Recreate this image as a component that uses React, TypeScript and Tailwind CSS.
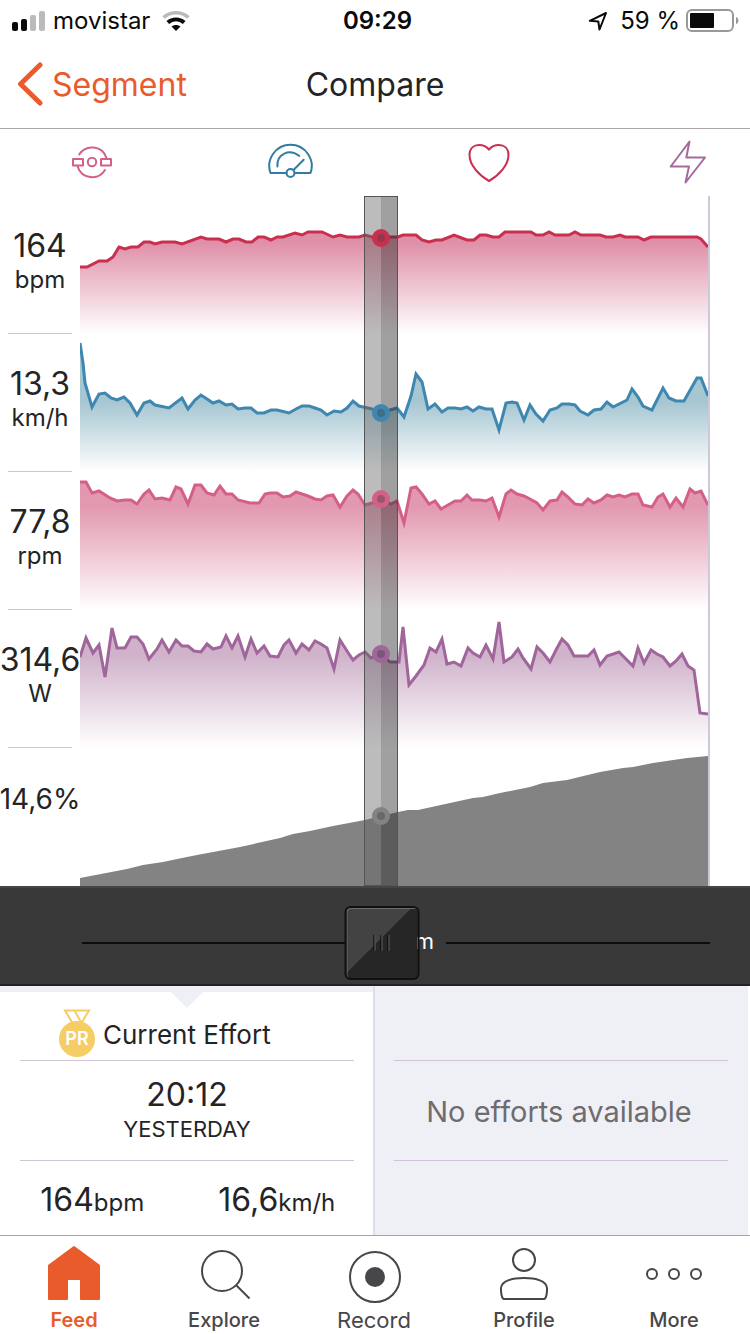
import { useState } from 'react';
import type { ReactNode } from 'react';

const PLOT_WIDTH = 628;
const ROW_HEIGHT = 138;

type Series = {
    id: string;
    value: string;
    unit?: string;
    stroke: string;
    fill: string;
    fillStart: number;
    points: string;
};

// points are x,y pairs inside a 628 x 138 row
const series: Series[] = [
    {
        id: 'heartrate',
        value: '164',
        unit: 'bpm',
        stroke: '#c9304f',
        fill: '#df8fa7',
        fillStart: 46,
        points:
            '0,71 7,71 19,65 27,65 33,61 39,51 45,53 51,51 58,51 64,46 70,46 75,48 82,46 95,46 102,48 121,41 127,43 139,43 146,46 153,43 159,43 166,46 172,46 178,41 184,41 191,44 197,41 203,41 215,37 222,39 228,36 242,36 253,41 260,39 267,41 279,41 285,39 292,41 301,42 310,41 318,41 323,39 336,39 342,44 349,46 356,44 362,44 374,39 387,44 394,44 400,39 406,39 413,41 419,41 425,36 451,36 456,39 463,39 469,36 475,39 489,39 495,36 501,39 520,39 526,41 533,41 540,39 545,41 558,41 564,44 571,41 617,41 621,43 628,51',
    },
    {
        id: 'speed',
        value: '13,3',
        unit: 'km/h',
        stroke: '#3e87b0',
        fill: '#a6c6d2',
        fillStart: 68,
        points:
            '0,9 3,29 5,49 12,73 19,60 25,59 31,64 37,66 44,63 50,69 57,81 64,69 70,67 75,71 89,74 102,64 108,75 115,66 121,61 127,65 133,69 139,67 146,71 152,70 158,75 165,74 171,74 177,79 184,79 191,76 197,76 209,79 216,75 222,72 229,72 235,74 241,76 247,81 254,77 261,78 267,74 273,67 279,72 292,75 301,79 310,76 317,74 324,83 331,62 336,40 342,48 348,75 355,70 362,78 368,74 375,74 381,75 387,73 393,77 399,73 406,75 412,75 419,96 426,69 432,68 437,69 444,86 450,71 456,80 463,87 470,76 477,74 482,70 489,70 495,71 500,77 508,81 514,76 521,75 527,68 533,73 547,66 552,55 558,63 563,72 572,76 583,54 589,64 596,67 604,67 617,44 621,44 628,62',
    },
    {
        id: 'cadence',
        value: '77,8',
        unit: 'rpm',
        stroke: '#d4608a',
        fill: '#e298af',
        fillStart: 34,
        points:
            '0,10 6,10 12,21 19,19 30,26 37,29 45,28 51,28 57,32 64,22 69,18 75,27 82,26 90,28 96,15 101,17 108,32 115,13 121,13 127,21 134,23 140,14 146,22 152,22 158,28 170,31 179,31 185,22 190,21 197,21 203,25 210,24 216,20 222,22 228,24 235,27 241,28 247,24 253,23 260,35 267,24 273,18 278,22 285,33 292,31 301,27 311,32 317,29 324,51 331,16 336,15 342,22 349,32 355,29 361,37 368,33 375,29 381,29 387,23 392,28 400,28 406,29 412,26 419,45 426,22 431,18 437,22 444,24 450,27 457,31 463,38 470,29 477,28 482,20 488,25 495,32 502,33 508,27 514,31 521,28 527,23 533,25 539,23 545,25 552,22 558,22 563,33 572,35 578,25 583,22 590,35 596,26 603,35 610,17 615,21 621,19 628,33',
    },
    {
        id: 'power',
        value: '314,6',
        unit: 'W',
        stroke: '#a0659a',
        fill: '#d0b3cb',
        fillStart: 46,
        points:
            '0,47 6,28 13,43 19,35 25,67 32,18 37,38 45,38 51,27 57,27 63,34 69,49 77,39 82,30 89,42 96,30 102,36 108,36 114,41 121,42 127,34 133,39 141,37 146,26 152,38 158,26 165,47 171,29 177,43 184,36 190,46 198,47 204,35 209,30 216,43 222,34 229,40 235,31 241,34 247,38 254,59 260,30 267,41 273,50 279,45 285,42 291,48 301,44 310,52 319,52 323,17 329,75 336,66 344,55 350,38 356,42 362,29 367,54 374,52 381,56 388,38 393,43 400,47 406,35 413,49 419,12 424,52 432,47 438,39 443,48 451,59 457,37 463,43 470,52 476,40 482,29 488,35 494,46 508,46 514,40 520,55 527,46 539,42 545,48 553,56 558,38 564,53 571,40 577,44 583,47 590,56 596,51 602,44 608,56 614,60 620,103 628,104',
    },
    {
        id: 'grade',
        value: '14,6%',
        stroke: '#838383',
        fill: '#838383',
        fillStart: ROW_HEIGHT,
        points:
            '0,130 47,121 63,117 83,114 102,110 117,107 160,99 200,90 213,86 230,83 253,78 285,72 301,68 318,64 328,62 338,62 393,50 403,49 420,45 450,39 463,35 487,32 520,24 543,20 553,19 573,15 607,10 628,8',
    },
];

const valueAt = (points: string, x: number) => {
    const pairs = points.split(' ').map((p) => p.split(',').map(Number));
    const next = pairs.findIndex(([px]) => px >= x);
    if (next <= 0) return pairs[0][1];
    const [x0, y0] = pairs[next - 1];
    const [x1, y1] = pairs[next];
    return y0 + ((y1 - y0) * (x - x0)) / (x1 - x0);
};

function StatusBar() {
    return (
        <div className="grid h-10 grid-cols-[1fr_auto_1fr] items-center pl-3 pr-[11px] pt-px text-2xl text-[#0a0a0a]">
            <div className="flex items-center gap-2">
                <svg width="33" height="20" viewBox="0 0 33 20">
                    <rect x="0" y="11" width="6" height="9" rx="2" fill="#0a0a0a" />
                    <rect x="9" y="8" width="6" height="12" rx="2" fill="#0a0a0a" />
                    <rect x="18" y="4" width="6" height="16" rx="2" fill="#bbb" />
                    <rect x="27" y="0" width="6" height="20" rx="2" fill="#bbb" />
                </svg>
                <span>movistar</span>
                <svg className="ml-1" width="28" height="20" viewBox="0 0 28 20" fill="none">
                    <path d="M1.5 6.5C8.5 .2 19.5 .2 26.5 6.5" stroke="#bbb" strokeWidth="3.6" />
                    <path d="M5.8 11.5C10.5 7.2 17.5 7.2 22.2 11.5" stroke="#0a0a0a" strokeWidth="3.8" />
                    <path d="M14 20L9.5 15.600C12 13.400 16 13.400 18.5 15.600Z" fill="#0a0a0a" />
                </svg>
            </div>
            <span className="pl-1 font-semibold">09:29</span>
            <div className="flex items-center justify-end">
                <svg width="20" height="20" viewBox="0 0 20 20" fill="none" stroke="#0a0a0a" strokeWidth="2" strokeLinejoin="round">
                    <path d="M1.800 9.800L18 2L11.500 18.500L10.300 10.500Z" />
                </svg>
                <span className="ml-3">59 %</span>
                <svg className="ml-1.5" width="53" height="24" viewBox="0 0 53 24">
                    <rect x="1" y="1" width="46" height="21" rx="5" fill="none" stroke="#999" strokeWidth="2" />
                    <rect x="4" y="4" width="24" height="15" rx="1" fill="#0a0a0a" />
                    <path d="M50 8C53.300 9 53.300 14 50 15Z" fill="#999" />
                </svg>
            </div>
        </div>
    );
}

function NavBar() {
    return (
        <header className="grid h-[89px] grid-cols-[1fr_auto_1fr] items-center border-b border-[#aca6ac] px-4 pt-0.5">
            <a href="#segment" className="flex items-center gap-2 text-[32px] text-[#ea5b2c]">
                <svg className="mb-0.5" width="28" height="44" viewBox="0 0 28 44" fill="none" stroke="currentColor" strokeWidth="5" strokeLinecap="round" strokeLinejoin="round">
                    <path d="M24 3L4.5 22L24 41" />
                </svg>
                Segment
            </a>
            <h1 className="text-[32px] text-[#242426]">Compare</h1>
        </header>
    );
}

function MetricButton({ label, color, children }: { label: string; color: string; children: ReactNode }) {
    return (
        <button type="button" aria-label={label} className={color}>
            <svg width="48" height="48" viewBox="0 0 48 48" fill="none" stroke="currentColor" strokeWidth="2" strokeLinecap="round" strokeLinejoin="round">
                {children}
            </svg>
        </button>
    );
}

function MetricToggles() {
    return (
        <div className="flex h-[67px] items-center justify-between pb-0.5 pl-[68px] pr-[39px]">
            <MetricButton label="Cadence" color="text-[#d4608a]">
                <path d="M11.2 16.5A15.2 15.2 0 0 1 38.5 20" />
                <path d="M9.6 28.5A15.2 15.2 0 0 0 37 32" />
                <circle cx="24" cy="24" r="4.2" />
                <rect x="5" y="21" width="10" height="6.5" />
                <rect x="33" y="21" width="10" height="6.5" />
            </MetricButton>
            <MetricButton label="Speed" color="text-[#327ca4]">
                <path d="M20.5 35H4.5A21.2 21.2 0 1 1 44.5 35H28.5" />
                <path d="M11.4 28.5C10.5 15.5 23.5 10.5 33.3 18" />
                <path d="M27.5 32L37.7 21.7" />
                <circle cx="24.5" cy="35" r="4" />
            </MetricButton>
            <MetricButton label="Heart rate" color="text-[#c9304f]">
                <path d="M24 43C14 37.5 4.5 27 4.5 17C4.5 10 9 7 14 7C18.5 7 22 9 24 11.7C26 9 29.5 7 34 7C39 7 43.5 10 43.5 17C43.5 27 34 37.5 24 43Z" />
            </MetricButton>
            <MetricButton label="Power" color="text-[#a56a9c]">
                <path d="M26.5 3.5L7.7 28.5H26L22.5 44.5L42 19.5H23.3Z" />
            </MetricButton>
        </div>
    );
}

function EffortChart({ position }: { position: number }) {
    const left = `${(position / PLOT_WIDTH) * 100}%`;
    return (
        <div className="flex pr-10">
            <div className="w-20 shrink-0 text-[#242426]">
                {series.map((s) => (
                    <div key={s.id} className="flex h-[138px] flex-col items-center pt-7">
                        <span className={s.unit ? 'text-[32px] leading-[44px]' : 'text-[28px] leading-[46px]'}>{s.value}</span>
                        {s.unit && <span className="text-2xl leading-6">{s.unit}</span>}
                        {s.unit && <hr className="mt-auto w-16 border-[#cec4d2]" />}
                    </div>
                ))}
            </div>
            <div className="relative flex-1 border-r-2 border-[#cdc8da]">
                {series.map((s) => (
                    <svg key={s.id} className="block h-[138px] w-full overflow-hidden" viewBox="0 0 628 138" preserveAspectRatio="none">
                        <defs>
                            <linearGradient id={`fade-${s.id}`} gradientUnits="userSpaceOnUse" x1="0" x2="0" y1={s.fillStart} y2={ROW_HEIGHT}>
                                <stop offset="0" stopColor={s.fill} />
                                <stop offset="1" stopColor={s.unit ? '#fff' : s.fill} />
                            </linearGradient>
                        </defs>
                        <polygon points={`0,138 ${s.points} 628,138`} fill={`url(#fade-${s.id})`} />
                        {s.unit && (
                            <polyline points={s.points} fill="none" stroke={s.stroke} strokeWidth="3" vectorEffect="non-scaling-stroke" />
                        )}
                    </svg>
                ))}
                {/* Scrub cursor */}
                <div className="absolute inset-y-0 flex w-[34px] -translate-x-1/2 border border-[#555]" style={{ left }}>
                    <div className="flex-1 bg-[#646464]/43" />
                    <div className="flex-1 bg-[#2c2c2c]/45" />
                </div>
                {series.map((s, i) => (
                    <div
                        key={s.id}
                        className="absolute flex size-[18px] -translate-x-1/2 -translate-y-1/2 items-center justify-center rounded-full"
                        style={{ left, top: i * ROW_HEIGHT + valueAt(s.points, position), backgroundColor: s.stroke }}
                    >
                        <div className="size-2 rounded-full bg-[#444]/40" />
                    </div>
                ))}
            </div>
        </div>
    );
}

function Scrubber({ position, onChange }: { position: number; onChange: (value: number) => void }) {
    return (
        <div className="h-[100px] border-b-2 border-t-2 border-b-[#222224] border-t-[#454545] bg-[#393939] pl-20 pr-10">
            <div className="relative flex h-full items-center pl-0.5 pt-[14px]">
                <div className="h-0.5 flex-1 bg-[#0c0c0c]" />
                <span className="w-[100px] pb-1 pr-3 text-right text-[22px] text-white">km</span>
                <div className="h-0.5 flex-1 bg-[#0c0c0c]" />
                <div
                    className="absolute top-[18px] flex h-[74px] w-[75px] -translate-x-1/2 items-center justify-center gap-[5px] rounded-md border-2 border-[#101010] bg-[linear-gradient(135deg,#434343_46%,#262626_46%)] shadow-[inset_1px_1px_0_#6a6a6a]"
                    style={{ left: `${(position / PLOT_WIDTH) * 100}%` }}
                >
                    <span className="h-4 w-0.5 border-r border-[#777] bg-black" />
                    <span className="h-4 w-0.5 border-r border-[#777] bg-black" />
                    <span className="h-4 w-0.5 border-r border-[#777] bg-black" />
                </div>
                <input
                    type="range"
                    aria-label="Position on segment"
                    min={0}
                    max={PLOT_WIDTH}
                    value={position}
                    onChange={(e) => onChange(Number(e.target.value))}
                    className="absolute inset-0 w-full cursor-pointer opacity-0"
                />
            </div>
        </div>
    );
}

function Efforts() {
    return (
        <div className="grid grid-cols-2 text-[#242426]">
            <section className="border-r-2 border-[#dcdfea]">
                <div className="h-1.5 bg-[#eff0f6]" />
                <div className="relative ml-5 mr-[19px] flex h-[69px] items-end gap-2 border-b border-[#d0c6d6] pb-[3px] pl-[39px]">
                    <svg className="absolute left-[151px] top-0" width="32" height="16" viewBox="0 0 32 16">
                        <path d="M0 0H32L16 16Z" fill="#eff0f6" />
                    </svg>
                    <svg width="36" height="48" viewBox="0 0 36 48">
                        <path d="M6 1.5H30L22.500 14H13.500Z" fill="#fff" stroke="#f6cc64" strokeWidth="2" />
                        <path d="M15.500 1.500L22.500 14" stroke="#f6cc64" strokeWidth="2" />
                        <circle cx="18" cy="30" r="18" fill="#f6cc64" />
                        <text x="18" y="36" textAnchor="middle" fontSize="18" fontWeight="600" fill="#fff">PR</text>
                    </svg>
                    <h2 className="pb-1.5 text-[26px] leading-8">Current Effort</h2>
                </div>
                <div className="ml-5 mr-[19px] flex h-[100px] flex-col items-center border-b border-[#d0c6d6] pt-[14px]">
                    <span className="text-[32px] leading-10">20:12</span>
                    <span className="text-[22px] leading-7">YESTERDAY</span>
                </div>
                <div className="grid h-[74px] grid-cols-2 items-center pr-1 pt-1 text-center">
                    <p className="text-[32px]">
                        164<span className="text-2xl">bpm</span>
                    </p>
                    <p className="text-[32px]">
                        16,6<span className="text-2xl">km/h</span>
                    </p>
                </div>
            </section>
            <section className="mr-0.5 bg-[#eff0f6] pl-[19px] pr-5">
                <div className="h-[75px] border-b border-[#d3c3d9]" />
                <p className="flex h-[100px] items-center justify-center border-b border-[#d3c3d9] pr-1 pt-0.5 text-[29px] text-[#6f6c70]">
                    No efforts available
                </p>
            </section>
        </div>
    );
}

function Tab({ label, className, children }: { label: string; className: string; children: ReactNode }) {
    return (
        <a href={`#${label.toLowerCase()}`} className={`flex flex-col items-center gap-0.5 leading-7 ${className}`}>
            <svg width="60" height="64" viewBox="0 0 60 64" fill="none" stroke="currentColor" strokeWidth="2">
                {children}
            </svg>
            <span className="pr-0.5">{label}</span>
        </a>
    );
}

function TabBar() {
    return (
        <nav className="grid grid-cols-5 border-t border-[#a5a3a8] pt-1">
            <Tab label="Feed" className="text-xl/7 font-semibold text-[#ea5b2c]">
                <path d="M29 7L54 25.5V59H36V39H22V59H4V25.5Z" fill="currentColor" strokeLinejoin="round" />
            </Tab>
            <Tab label="Explore" className="text-xl/7 font-medium text-[#47474a]">
                <circle cx="27" cy="31" r="20" />
                <path d="M41.5 45.5L54.5 58.5" />
            </Tab>
            <Tab label="Record" className="text-[22px]/7 text-[#47474a]">
                <circle cx="30" cy="37" r="25" />
                <circle cx="30" cy="37" r="10" fill="currentColor" stroke="none" />
            </Tab>
            <Tab label="Profile" className="text-xl/7 font-medium text-[#47474a]">
                <circle cx="29" cy="20" r="11" />
                <path d="M9 59C6.5 59 5.8 51.5 6 48C6.5 41 17 38 29 38C41 38 51.5 41 52 48C52.2 51.5 51.5 59 49 59Z" />
            </Tab>
            <Tab label="More" className="text-xl/7 font-medium text-[#47474a]">
                <circle cx="7" cy="34" r="5" />
                <circle cx="29" cy="34" r="5" />
                <circle cx="51" cy="34" r="5" />
            </Tab>
        </nav>
    );
}

export default function App() {
    const [position, setPosition] = useState(301);

    return (
        <div className="min-h-screen bg-white font-[Inter,sans-serif]">
            <StatusBar />
            <NavBar />
            <main>
                <MetricToggles />
                <EffortChart position={position} />
                <Scrubber position={position} onChange={setPosition} />
                <Efforts />
            </main>
            <TabBar />
        </div>
    );
}
